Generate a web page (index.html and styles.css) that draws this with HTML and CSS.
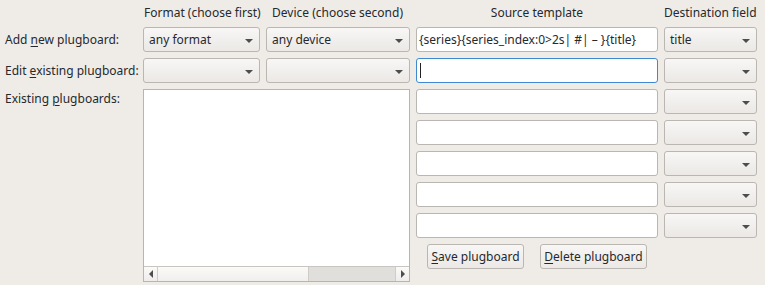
FILE: index.html
```html
<!DOCTYPE html>
<html>
<head>
<meta charset="utf-8">
<link rel="stylesheet" href="styles.css">
</head>
<body>
<div class="grid">
  <div class="hdr hdr-format"><span>Format (choose first)</span></div>
  <div class="hdr hdr-device"><span>Device (choose second)</span></div>
  <div class="hdr hdr-source"><span>Source template</span></div>
  <div class="hdr hdr-dest"><span>Destination field</span></div>

  <div class="lbl"><span>Add <u>n</u>ew plugboard:</span></div>
  <div class="combo"><span>any format</span><i class="arrow"></i></div>
  <div class="combo"><span>any device</span><i class="arrow"></i></div>
  <div class="edit"><span class="tpl">{series}{series_index:0&gt;2s| #| – }{title}</span></div>
  <div class="combo"><span>title</span><i class="arrow"></i></div>

  <div class="lbl"><span>Edit <u>e</u>xisting plugboard:</span></div>
  <div class="combo"><span></span><i class="arrow"></i></div>
  <div class="combo"><span></span><i class="arrow"></i></div>
  <div class="edit focus"><span class="caret"></span></div>
  <div class="combo"><span></span><i class="arrow"></i></div>

  <div class="lbl lbl-top"><span>Existing <u>p</u>lugboards:</span></div>
  <div class="list">
    <div class="list-body"></div>
    <div class="hscroll">
      <div class="sbtn"><i class="larr"></i></div>
      <div class="thumb"></div>
      <div class="track"></div>
      <div class="sbtn sbtn-r"><i class="rarr"></i></div>
    </div>
  </div>
  <div class="edit col4"></div>
  <div class="combo"><span></span><i class="arrow"></i></div>
  <div class="edit col4"></div>
  <div class="combo"><span></span><i class="arrow"></i></div>
  <div class="edit col4"></div>
  <div class="combo"><span></span><i class="arrow"></i></div>
  <div class="edit col4"></div>
  <div class="combo"><span></span><i class="arrow"></i></div>
  <div class="edit col4"></div>
  <div class="combo"><span></span><i class="arrow"></i></div>

  <div class="buttons">
    <div class="btn btn-save"><span><u>S</u>ave plugboard</span></div>
    <div class="btn btn-del"><span><u>D</u>elete plugboard</span></div>
  </div>
</div>
</body>
</html>
```

FILE: styles.css
```css
html, body {
  margin: 0;
  padding: 0;
  background: #efece8;
  width: 765px;
  height: 285px;
  overflow: hidden;
}
body {
  font-family: "Noto Sans", "Open Sans", sans-serif;
  font-size: 12px;
  color: #26292c;
}
u {
  text-decoration: underline;
  text-underline-offset: 2px;
  text-decoration-thickness: 1px;
}
.grid {
  display: grid;
  grid-template-columns: 137px 117px 144px 242px 93px;
  grid-template-rows: 21px repeat(8, 25px) 7px;
  column-gap: 6px;
  row-gap: 6px;
}
.hdr {
  display: flex;
  align-items: flex-end;
  line-height: 17px;
  white-space: nowrap;
}
.hdr-format { grid-column: 2; padding-left: 1px; }
.hdr-device { grid-column: 3; padding-left: 6px; }
.hdr-source { grid-column: 4; justify-content: center; }
.hdr-dest { grid-column: 5; }
.lbl {
  grid-column: 1;
  padding-left: 5px;
  display: flex;
  align-items: center;
  white-space: nowrap;
}
.lbl-top {
  align-items: flex-start;
  line-height: 17px;
  padding-top: 1px;
}
.combo {
  box-sizing: border-box;
  border: 1px solid #bab6b1;
  border-radius: 3px;
  background: linear-gradient(#f8f7f6, #ebe8e5);
  display: flex;
  align-items: center;
  justify-content: space-between;
  padding: 0 6px 0 5px;
  white-space: nowrap;
}
.arrow {
  width: 0;
  height: 0;
  border-left: 4px solid transparent;
  border-right: 4px solid transparent;
  border-top: 4px solid #4d4d4d;
  margin-top: 2px;
}
.edit {
  box-sizing: border-box;
  border: 1px solid #bab6b1;
  border-radius: 3px;
  background: #ffffff;
  display: flex;
  align-items: center;
  padding: 0 2px;
  white-space: nowrap;
  overflow: hidden;
}
.tpl {
  white-space: pre;
}
.col4 { grid-column: 4; }
.edit.focus {
  border-color: #3d8ad1;
}
.caret {
  display: block;
  width: 1px;
  height: 15px;
  background: #222;
  margin-left: 1px;
}
.list {
  grid-column: 2 / span 2;
  grid-row: 4 / -1;
  box-sizing: border-box;
  border: 1px solid #b8b4af;
  background: #ffffff;
  display: flex;
  flex-direction: column;
}
.list-body { flex: 1; }
.hscroll {
  height: 14px;
  display: flex;
  border-top: 1px solid #c8c5c1;
}
.sbtn {
  width: 13px;
  background: linear-gradient(#fbfaf9, #efedeb);
  border-right: 1px solid #d0cdc9;
  display: flex;
  align-items: center;
  justify-content: center;
}
.sbtn-r {
  border-right: none;
  border-left: 1px solid #d0cdc9;
}
.larr {
  width: 0; height: 0;
  border-top: 4px solid transparent;
  border-bottom: 4px solid transparent;
  border-right: 4px solid #4d4d4d;
}
.rarr {
  width: 0; height: 0;
  border-top: 4px solid transparent;
  border-bottom: 4px solid transparent;
  border-left: 4px solid #4d4d4d;
}
.thumb {
  width: 150px;
  background: linear-gradient(#fbfaf9, #f1efed);
  border-right: 1px solid #cfccc8;
}
.track {
  flex: 1;
  background: #e1dfdb;
}
.buttons {
  grid-column: 4 / span 2;
  grid-row: 9;
  display: flex;
  gap: 16px;
  padding-left: 11px;
}
.btn {
  box-sizing: border-box;
  border: 1px solid #bab6b1;
  border-radius: 3px;
  background: linear-gradient(#f8f7f6, #ebe8e5);
  display: flex;
  align-items: center;
  justify-content: center;
  white-space: nowrap;
}
.btn-save { width: 97px; }
.btn-del { width: 107px; }
```
